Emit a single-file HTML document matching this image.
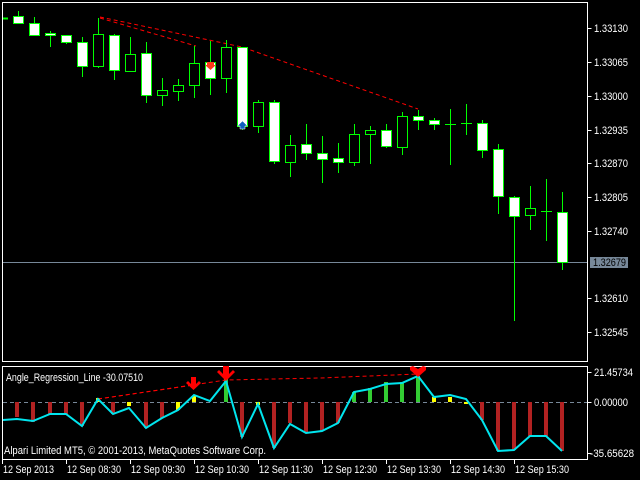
<!DOCTYPE html>
<html><head><meta charset="utf-8"><style>
html,body{margin:0;padding:0;background:#000;width:640px;height:480px;overflow:hidden}
svg{display:block}
text{font-family:"Liberation Sans","DejaVu Sans",sans-serif;font-size:11px;fill:#fff}
</style></head><body>
<svg width="640" height="480" viewBox="0 0 640 480" xmlns="http://www.w3.org/2000/svg">
<rect width="640" height="480" fill="#000"/>
<g stroke="#fff" stroke-width="1" fill="none">
<path d="M2.5 2.5H587.5V361.5H2.5Z"/>
<path d="M2.5 366.5H587.5V459.5H2.5Z"/>
<path d="M587.5 28.5h4M587.5 62.5h4M587.5 96.5h4M587.5 130.5h4M587.5 163.5h4M587.5 197.5h4M587.5 231.5h4M587.5 298.5h4M587.5 332.5h4M587.5 372.5h4M587.5 402.5h4M587.5 453.5h4"/>
<path d="M2.5 459v5M66.5 459v5M130.5 459v5M194.5 459v5M258.5 459v5M322.5 459v5M386.5 459v5M450.5 459v5M514.5 459v5"/>
</g>
<line x1="3" y1="262.5" x2="587" y2="262.5" stroke="#778899"/>
<g stroke="#f00" stroke-width="1" stroke-dasharray="4,3" fill="none">
<path d="M100 17 L242 47 L418 109"/>
<path d="M100 18 L196 46"/>
</g>
<g stroke="#00ff00" stroke-width="1">
<line x1="3" y1="18.5" x2="8" y2="18.5" stroke-width="2"/>
<path d="M18.5 11V16M34.5 17V23M50.5 31V47M66.5 42V44M82.5 37V77M98.5 18V68M114.5 34V80M130.5 37V54M146.5 42V103M162.5 78V106M178.5 79V101M194.5 46V98M210.5 41V95M226.5 40V93M242.5 47V130M258.5 100V133M274.5 100V164M290.5 135V177M306.5 124V160M322.5 136V183M338.5 143V173M354.5 124V166M370.5 126V164M386.5 124V148M402.5 112V155M418.5 110V130M434.5 118V130M450.5 109V165M466.5 104V135M482.5 120V158M498.5 144V214M514.5 196V321M530.5 186V230M546.5 179V241M562.5 192V270"/>
<g fill="#fff">
<rect x="13.5" y="16.5" width="10" height="7"/>
<rect x="29.5" y="23.5" width="10" height="12"/>
<rect x="45.5" y="33.5" width="10" height="2"/>
<rect x="61.5" y="35.5" width="10" height="7"/>
<rect x="77.5" y="42.5" width="10" height="24"/>
<rect x="109.5" y="35.5" width="10" height="35"/>
<rect x="141.5" y="53.5" width="10" height="42"/>
<rect x="205.5" y="62.5" width="10" height="16"/>
<rect x="237.5" y="47.5" width="10" height="79"/>
<rect x="269.5" y="102.5" width="10" height="59"/>
<rect x="301.5" y="144.5" width="10" height="9"/>
<rect x="317.5" y="153.5" width="10" height="6"/>
<rect x="333.5" y="158.5" width="10" height="4"/>
<rect x="381.5" y="130.5" width="10" height="16"/>
<rect x="413.5" y="116.5" width="10" height="4"/>
<rect x="429.5" y="120.5" width="10" height="4"/>
<rect x="477.5" y="123.5" width="10" height="27"/>
<rect x="493.5" y="149.5" width="10" height="47"/>
<rect x="509.5" y="197.5" width="10" height="19"/>
<rect x="557.5" y="212.5" width="10" height="50"/>
</g>
<g fill="#000">
<rect x="93.5" y="34.5" width="10" height="32"/>
<rect x="125.5" y="54.5" width="10" height="17"/>
<rect x="157.5" y="90.5" width="10" height="5"/>
<rect x="173.5" y="85.5" width="10" height="6"/>
<rect x="189.5" y="63.5" width="10" height="22"/>
<rect x="221.5" y="47.5" width="10" height="31"/>
<rect x="253.5" y="102.5" width="10" height="24"/>
<rect x="285.5" y="145.5" width="10" height="17"/>
<rect x="349.5" y="134.5" width="10" height="28"/>
<rect x="365.5" y="130.5" width="10" height="4"/>
<rect x="397.5" y="116.5" width="10" height="31"/>
<rect x="525.5" y="208.5" width="10" height="7"/>
</g>
<path d="M445 124.5h11M461 123.5h11M541 211.5h11"/>
</g>
<path d="M207 62h7v3h2l-5.5 5-5.5-5h2z" fill="#ff3a1a"/>
<path d="M242.5 121l5 5h-2.5v3h-5v-3h-2.5z" fill="#1060c0" stroke="#fff" stroke-width="0.5"/>
<g>
<text x="594" y="32" textLength="34" lengthAdjust="spacingAndGlyphs">1.33130</text>
<text x="594" y="66" textLength="34" lengthAdjust="spacingAndGlyphs">1.33065</text>
<text x="594" y="100" textLength="34" lengthAdjust="spacingAndGlyphs">1.33000</text>
<text x="594" y="134" textLength="34" lengthAdjust="spacingAndGlyphs">1.32935</text>
<text x="594" y="167" textLength="34" lengthAdjust="spacingAndGlyphs">1.32870</text>
<text x="594" y="201" textLength="34" lengthAdjust="spacingAndGlyphs">1.32805</text>
<text x="594" y="235" textLength="34" lengthAdjust="spacingAndGlyphs">1.32740</text>
<rect x="590" y="257" width="38" height="11" fill="#778899"/>
<text x="593" y="266" textLength="33" lengthAdjust="spacingAndGlyphs" style="fill:#000">1.32679</text>
<text x="594" y="302" textLength="34" lengthAdjust="spacingAndGlyphs">1.32610</text>
<text x="594" y="336" textLength="34" lengthAdjust="spacingAndGlyphs">1.32545</text>
</g>
<line x1="3" y1="402.5" x2="587" y2="402.5" stroke="#778899" stroke-dasharray="4,3"/>
<g stroke-width="4">
<path stroke="#b22222" d="M17 402V417M33 402V422M50 402V415M66 402V414M82 402V426M113 402V414M146 402V428M162 402V418M242 402V437M274 402V448M290 402V423M306 402V433M322 402V431M338 402V423M482 402V420M498 402V451M514 402V450M530 402V436M546 402V436M562 402V451"/>
<path stroke="#ffff00" d="M98 398V402M129 402V406M178 402V410M194 396V402M258 402V405M434 397V402M450 397V402M466 402V404"/>
<path stroke="#33cc33" d="M226 375V402M354 392V402M370 388V402M386 382V402M402 382V402M418 376V402"/>
</g>
<g stroke="#f00" stroke-width="1" stroke-dasharray="4,3" fill="none">
<path d="M98 399 L194 385"/>
<path d="M98 399 L226 380 L320 378 L418 374"/>
</g>
<polyline fill="none" stroke="#00e5ee" stroke-width="2" points="3,420 17,419 33,421 50,414 66,414 82,426 98,399 113,414 129,408 146,428 162,418 178,410 194,395 210,401 226,381 242,437 258,404 274,448 290,424 306,433 322,431 338,423 354,392 370,389 386,384 402,383 418,376 434,397 450,395 466,399 482,420 498,451 514,450 530,436 546,436 562,451"/>
<g fill="#f00">
<path d="M191 377h5v7l3-3 2 2-7.5 7-7.5-7 2-2 3 3z"/>
<path d="M223 366h6v8l4-4 2 2-9 9-9-9 2-2 4 4z"/>
<path d="M410 367l3-1 5 3 5-3 3 1v3l-8 7-8-7z"/>
</g>
<text x="6" y="381" textLength="137" lengthAdjust="spacingAndGlyphs">Angle_Regression_Line -30.07510</text>
<text x="4" y="454" textLength="262" lengthAdjust="spacingAndGlyphs">Alpari Limited MT5, © 2001-2013, MetaQuotes Software Corp.</text>
<text x="594" y="376" textLength="39" lengthAdjust="spacingAndGlyphs">21.45734</text>
<text x="594" y="406" textLength="34" lengthAdjust="spacingAndGlyphs">0.00000</text>
<text x="590" y="457" textLength="44" lengthAdjust="spacingAndGlyphs">-35.65628</text>
<g>
<text x="3" y="473" textLength="51" lengthAdjust="spacingAndGlyphs">12 Sep 2013</text>
<text x="67" y="473" textLength="54" lengthAdjust="spacingAndGlyphs">12 Sep 08:30</text>
<text x="131" y="473" textLength="54" lengthAdjust="spacingAndGlyphs">12 Sep 09:30</text>
<text x="195" y="473" textLength="54" lengthAdjust="spacingAndGlyphs">12 Sep 10:30</text>
<text x="259" y="473" textLength="54" lengthAdjust="spacingAndGlyphs">12 Sep 11:30</text>
<text x="323" y="473" textLength="54" lengthAdjust="spacingAndGlyphs">12 Sep 12:30</text>
<text x="387" y="473" textLength="54" lengthAdjust="spacingAndGlyphs">12 Sep 13:30</text>
<text x="451" y="473" textLength="54" lengthAdjust="spacingAndGlyphs">12 Sep 14:30</text>
<text x="515" y="473" textLength="54" lengthAdjust="spacingAndGlyphs">12 Sep 15:30</text>
</g>
</svg>
</body></html>
